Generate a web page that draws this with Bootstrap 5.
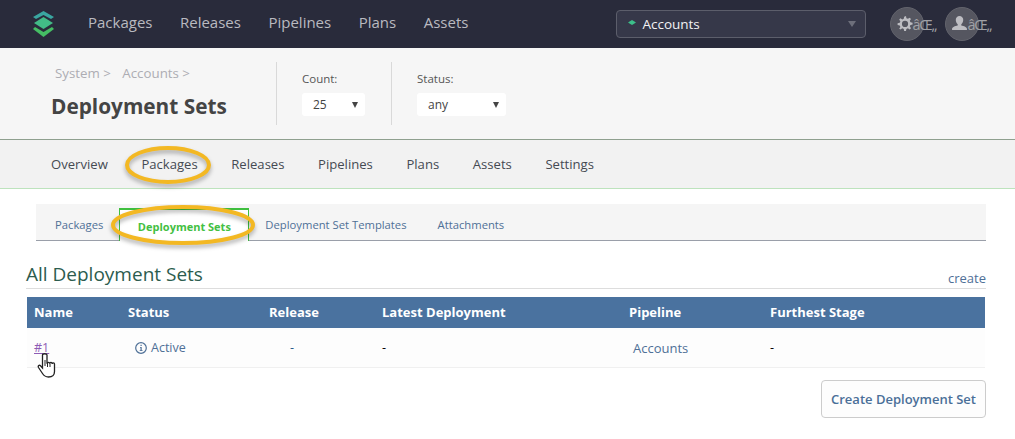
<!DOCTYPE html>
<html lang="en">
<head>
<meta charset="UTF-8">
<meta name="viewport" content="width=device-width, initial-scale=1.0">
<title>Deployment Sets</title>
<link href="https://cdn.jsdelivr.net/npm/bootstrap@5.3.0/dist/css/bootstrap.min.css" rel="stylesheet">
<style>
body { font-family: "Open Sans", "Noto Sans", sans-serif; font-size: 13px; background: #fff; overflow: hidden; position: relative; height: 439px; }
a { text-decoration: none; }
.top-bar { height: 48px; background: #292b3b; padding-left: 32px; }
.top-logo { width: 23px; height: 26px; margin-right: 33px; }
.top-links { gap: 27.5px; margin-bottom: 4px; }
.top-links a { color: #b9bac0; font-size: 15px; }
.top-select { width: 250px; height: 28px; margin-left: 148px; background: #363849; border: 1px solid #5c5e6b; border-radius: 4px; color: #f2f2f4; font-size: 13.5px; padding: 0 9px 0 11px; }
.top-dot { width: 8px; height: 5px; margin-right: 6px; margin-top: -3px; }
.top-caret { margin-left: auto; width: 0; height: 0; border: 4px solid transparent; border-top: 6px solid #6d6f7b; border-bottom: 0; }
.round-btn { position: relative; width: 34px; height: 34px; border-radius: 50%; background: #555660; border: 1px solid #62636c; margin-left: 24px; padding-right: 6px; padding-bottom: 1px; }
.round-btn.next-btn { margin-left: 21px; }
.round-btn svg { width: 17px; height: 17px; }
.round-txt { position: absolute; left: 21px; top: 6px; font-size: 14.5px; letter-spacing: -1.2px; color: #a0a1a6; white-space: nowrap; }
.head-band { height: 91px; background: #f6f6f6; padding-top: 14px; }
.title-box { width: 277px; height: 63px; padding-left: 51px; border-right: 1px solid #d9d9d9; }
.crumbs { color: #adadb3; font-size: 13.3px; padding-left: 4px; margin-top: 2px; }
.crumbs span { margin-right: 8px; }
.page-title { font-size: 20.8px; font-weight: 700; color: #444; margin: 10px 0 0; }
.filter-box { padding: 0 0 0 25px; height: 63px; border-right: 1px solid #d9d9d9; }
.filter-box.wide { width: 115px; }
.filter-box.bare { border: 0; }
.filter-box label { display: block; font-size: 11.5px; color: #555; margin: 9px 0 6px; line-height: 16px; }
.fake-select { width: 63px; height: 23px; background: #fff; border-radius: 3px; font-size: 12px; color: #444; padding: 0 7px 0 11px; }
.fake-select.big { width: 89px; }
.fake-select i { margin-left: auto; border: 3.5px solid transparent; border-top: 6px solid #444; border-bottom: 0; }
.sub-nav { height: 50px; background: #f2f2f2; border-top: 1px solid #8fa08f; border-bottom: 1px solid #bde3bd; padding: 2px 0 0 51px; gap: 33.6px; }
.sub-nav a { color: #454a52; font-size: 13.1px; }
.tab-strip { margin: 15px 29px 0 36px; height: 37px; background: #f5f5f5; border-bottom: 1px solid #9a9fa9; padding: 6px 0 0 19px; font-size: 11.25px; }
.tab-strip a { color: #4f7097; }
.tab-on { width: 130px; height: 33px; margin: -1px 16px 0 16px; background: #fff; border: 1px solid #3fbf3f; border-top-width: 2px; border-bottom: 0; text-align: center; font-weight: 700; padding-top: 9px; font-size: 11px; }
.tab-strip a.tab-on { color: #43c043; }
.tab-strip a.tab-gap { margin-right: 31px; }
.sect-head { margin: 20px 29px 0 26px; height: 28px; border-bottom: 1px solid #ddd; }
.sect-head h2 { font-size: 19px; font-weight: 400; color: #2c5c4e; margin: 0 0 1px; line-height: 26px; }
.sect-head a { color: #4f7097; font-size: 13px; }
.data-table { width: 958px; margin: 8px 0 0 27px; table-layout: fixed; border-collapse: collapse; }
.data-table th { background: #4a729f; color: #fff; height: 31px; font-size: 13px; font-weight: 700; padding: 1px 7px 0; border: 0; }
.data-table td { background: #fdfdfd; height: 39px; font-size: 12.5px; padding: 3px 7px 0; border-bottom: 1px solid #f0f0f0; color: #000; }
.data-table td a { color: #4f7097; }
.data-table td a.seen { color: #8e5bb5; text-decoration: underline; }
.data-table td.stat-cell { padding-left: 14px; }
.data-table td.rel-cell { padding-left: 28px; }
.data-table td.rel-cell a { color: #2a5a8c; }
.data-table td.pipe-cell { padding-left: 11px; font-size: 13px; }
.info-ic { width: 12px; height: 12px; vertical-align: -2px; margin-right: 4px; }
.make-btn { display: block; width: 165px; height: 38px; margin: 12px 0 0 821px; padding: 0; background: #fdfdfd; border: 1px solid #ccc; border-radius: 4px; color: #4a6f98; font-size: 13px; font-weight: 600; line-height: 36px; }
.ring { position: absolute; pointer-events: none; filter: drop-shadow(0 3px 2px rgba(0,0,0,.3)); }
.hand { position: absolute; left: 37px; top: 352px; width: 20px; height: 28px; }
</style>
</head>
<body>
<div class="top-bar d-flex align-items-center">
    <svg class="top-logo" viewBox="0 0 23 26">
        <path d="M11.5 0 22 6 19 8 11.5 4 4 8 1 6z" fill="#3aa6a0"/>
        <path d="M11.5 6 21 12 11.5 18 2 12z" fill="#42bb87"/>
        <path d="M3 16 11.5 21 20 16 22 18 11.5 26 1 18z" fill="#45bd64"/>
    </svg>
    <div class="top-links d-flex">
        <a href="#">Packages</a>
        <a href="#">Releases</a>
        <a href="#">Pipelines</a>
        <a href="#">Plans</a>
        <a href="#">Assets</a>
    </div>
    <div class="top-select d-flex align-items-center">
        <svg class="top-dot" viewBox="0 0 8 5"><path d="M4 0 8 2.5 4 5 0 2.5z" fill="#3cc08a"/></svg>
        Accounts
        <i class="top-caret"></i>
    </div>
    <div class="round-btn d-flex align-items-center justify-content-center">
        <svg viewBox="0 0 16 16"><path fill="#bdbdc2" d="M9.4 1l.4 2 1.4.6 1.7-1.1 1.2 1.2-1.1 1.7.6 1.4 2 .4v1.7l-2 .4-.6 1.4 1.1 1.7-1.2 1.2-1.7-1.1-1.4.6-.4 2H7.7l-.4-2-1.4-.6-1.7 1.1L3 13l1.1-1.7-.6-1.4-2-.4V7.8l2-.4.6-1.4L3 4.3l1.2-1.2L5.900 4.200l1.400-.6.4-2zM8.500 5.500a2.900 2.900 0 1 0 0 5.800 2.900 2.900 0 0 0 0-5.800z"/></svg>
        <span class="round-txt">âŒ„</span>
    </div>
    <div class="round-btn next-btn d-flex align-items-center justify-content-center">
        <svg viewBox="0 0 16 16"><path fill="#bdbdc2" d="M8 1a3.500 3.500 0 0 1 3.500 3.800c0 1.700-.9 3.200-1.800 3.900v1.100c2.500.6 5.300 1.400 5.300 3.200v1H1v-1c0-1.800 2.800-2.600 5.300-3.200V8.700C5.400 8 4.500 6.500 4.500 4.800A3.500 3.500 0 0 1 8 1z"/></svg>
        <span class="round-txt">âŒ„</span>
    </div>
</div>

<div class="head-band d-flex">
    <div class="title-box">
        <div class="crumbs"><span>System &gt;</span> <span>Accounts &gt;</span></div>
        <h1 class="page-title">Deployment Sets</h1>
    </div>
    <div class="filter-box wide">
        <label>Count:</label>
        <div class="fake-select d-flex align-items-center">25<i></i></div>
    </div>
    <div class="filter-box bare">
        <label>Status:</label>
        <div class="fake-select big d-flex align-items-center">any<i></i></div>
    </div>
</div>

<div class="sub-nav d-flex align-items-center">
    <a href="#">Overview</a>
    <a href="#">Packages</a>
    <a href="#">Releases</a>
    <a href="#">Pipelines</a>
    <a href="#">Plans</a>
    <a href="#">Assets</a>
    <a href="#">Settings</a>
</div>

<div class="tab-strip d-flex align-items-center">
    <a href="#">Packages</a>
    <a href="#" class="tab-on">Deployment Sets</a>
    <a href="#" class="tab-gap">Deployment Set Templates</a>
    <a href="#">Attachments</a>
</div>

<div class="sect-head d-flex justify-content-between align-items-end">
    <h2>All Deployment Sets</h2>
    <a href="#">create</a>
</div>

<table class="data-table">
    <colgroup><col style="width:94px"><col style="width:141px"><col style="width:113px"><col style="width:247px"><col style="width:141px"><col></colgroup>
    <thead>
        <tr><th>Name</th><th>Status</th><th>Release</th><th>Latest Deployment</th><th>Pipeline</th><th>Furthest Stage</th></tr>
    </thead>
    <tbody>
        <tr>
            <td><a href="#" class="seen">#1</a></td>
            <td class="stat-cell"><a href="#"><svg class="info-ic" viewBox="0 0 12 12"><circle cx="6" cy="6" r="5.300" fill="none" stroke="#4f7097" stroke-width="1.200"/><path d="M5 5h1.700v3.200H7.600v.8H4.700v-.8h.8V5.800H5zM5.500 2.800h1.200V4H5.500z" fill="#4f7097"/></svg>Active</a></td>
            <td class="rel-cell"><a href="#">-</a></td>
            <td>-</td>
            <td class="pipe-cell"><a href="#">Accounts</a></td>
            <td>-</td>
        </tr>
    </tbody>
</table>

<a href="#" class="make-btn btn text-center">Create Deployment Set</a>

<svg class="ring" style="left:118px;top:140px" width="100" height="52" viewBox="0 0 100 52"><ellipse cx="50" cy="25" rx="41" ry="17" fill="none" stroke="#f3b823" stroke-width="4"/></svg>
<svg class="ring" style="left:105px;top:200px" width="156" height="52" viewBox="0 0 156 52"><ellipse cx="78" cy="25" rx="70" ry="18" fill="none" stroke="#f3b823" stroke-width="4"/></svg>
<svg class="hand" viewBox="0 0 20 28"><path d="M5.500 3v13L3.500 13.700C2.300 12.500.6 14 1.500 15.500l4 6c1.500 2.300 3 3.500 6 3.500 4 0 6-2 6-5.500V12c0-1.600-2.200-1.600-2.300 0 0-2-2.500-2-2.500-.2 0-1.800-2.700-1.800-2.700 0V3C10 1.300 5.500 1.300 5.500 3z" fill="#fff" stroke="#222" stroke-width="1.300"/><path d="M8 8v6M10.500 11v4M13 11.500V15" stroke="#222" stroke-width="1"/></svg>
</body>
</html>
